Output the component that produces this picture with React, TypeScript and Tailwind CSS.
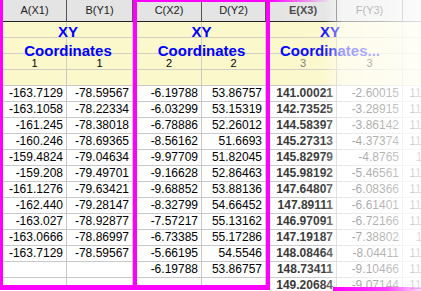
import React from "react";

type Col = {
  w: string;
  head: string;
  idx: string;
  vals: string[];
  headClass?: string;
  idxClass?: string;
  valClass?: string;
};

// 列1本ぶん: ヘッダ, ラベル行(黄色), データ行
function Column({ col }: { col: Col }) {
  return (
    <div className={`${col.w} shrink-0 flex flex-col`}>
      <div
        className={`h-[22px] shrink-0 border-b border-r border-b-[#222] border-r-[#555] bg-[#e4e4e4] text-center text-[11px] leading-[21px] ${
          col.headClass ?? "text-[#222]"
        }`}
      >
        {col.head}
      </div>
      <div className="h-[16px] shrink-0 border-b border-r border-[#cfcfc4] bg-[#fbf8cb]" />
      <div className="h-[16px] shrink-0 border-b border-r border-[#cfcfc4] bg-[#fbf8cb]" />
      <div
        className={`h-[16px] shrink-0 border-b border-r border-[#cfcfc4] bg-[#fbf8cb] pt-[2px] text-center text-[11px] leading-[15px] ${
          col.idxClass ?? "text-black"
        }`}
      >
        {col.idx}
      </div>
      <div className="h-[16px] shrink-0 border-b border-r border-[#c8c8c8] bg-[#fbf8cb]" />
      {col.vals.map((v, i) => (
        <div
          key={i}
          className={`h-[16px] shrink-0 border-b border-r border-[#c8c8c8] bg-white pr-[3px] text-right text-[12px] leading-[15px] ${
            col.valClass ?? "text-black"
          }`}
        >
          {v}
        </div>
      ))}
    </div>
  );
}

function Label({ text, className }: { text: string; className: string }) {
  return (
    <div
      className={`absolute top-[22px] text-center text-[15px] font-bold leading-[19px] text-[#0000ff] ${className}`}
    >
      XY
      <br />
      {text}
    </div>
  );
}

const colA: Col = {
  w: "w-[64px]",
  head: "A(X1)",
  idx: "1",
  vals: [
    "-163.7129",
    "-163.1058",
    "-161.245",
    "-160.246",
    "-159.4824",
    "-159.208",
    "-161.1276",
    "-162.440",
    "-163.027",
    "-163.0666",
    "-163.7129",
    "",
    "",
  ],
};

const colB: Col = {
  w: "w-[66px]",
  head: "B(Y1)",
  idx: "1",
  vals: [
    "-78.59567",
    "-78.22334",
    "-78.38018",
    "-78.69365",
    "-79.04634",
    "-79.49701",
    "-79.63421",
    "-79.28147",
    "-78.92877",
    "-78.86997",
    "-78.59567",
    "",
    "",
  ],
};

const colC: Col = {
  w: "w-[65px]",
  head: "C(X2)",
  idx: "2",
  vals: [
    "-6.19788",
    "-6.03299",
    "-6.78886",
    "-8.56162",
    "-9.97709",
    "-9.16628",
    "-9.68852",
    "-8.32799",
    "-7.57217",
    "-6.73385",
    "-5.66195",
    "-6.19788",
    "",
  ],
};

const colD: Col = {
  w: "w-[64px]",
  head: "D(Y2)",
  idx: "2",
  vals: [
    "53.86757",
    "53.15319",
    "52.26012",
    "51.6693",
    "51.82045",
    "52.86463",
    "53.88136",
    "54.66452",
    "55.13162",
    "55.17286",
    "54.5546",
    "53.86757",
    "",
  ],
};

const colE: Col = {
  w: "w-[67px]",
  head: "E(X3)",
  idx: "3",
  headClass: "text-[#444] font-bold",
  idxClass: "text-[#777]",
  valClass: "text-[#333] font-bold",
  vals: [
    "141.00021",
    "142.73525",
    "144.58397",
    "145.27313",
    "145.82979",
    "145.98192",
    "147.64807",
    "147.89111",
    "146.97091",
    "147.19187",
    "148.08464",
    "148.73411",
    "149.20684",
  ],
};

const colF: Col = {
  w: "w-[66px]",
  head: "F(Y3)",
  idx: "3",
  vals: [
    "-2.60015",
    "-3.28915",
    "-3.86142",
    "-4.37374",
    "-4.8765",
    "-5.46561",
    "-6.08366",
    "-6.61401",
    "-6.72166",
    "-7.38802",
    "-8.04411",
    "-9.10466",
    "-9.07144",
  ],
};

const colG: Col = {
  w: "w-[66px]",
  head: "G(X4)",
  idx: "4",
  vals: [
    "116.20482",
    "117.41236",
    "118.03571",
    "118.66102",
    "11.79344",
    "117.25819",
    "116.87403",
    "115.90127",
    "115.32768",
    "11.46612",
    "113.88205",
    "112.94061",
    "112.05533",
  ],
};

export default function App() {
  return (
    <div className="relative flex h-[291px] w-[421px] overflow-hidden bg-white font-['Liberation_Sans',Arial,sans-serif]">
      {/* 選択範囲 1 */}
      <div className="relative flex h-[290px] shrink-0 overflow-hidden border-b-[5px] border-l-[3px] border-r-4 border-[#ff00ff]">
        <Column col={colA} />
        <Column col={colB} />
        <Label text="Coordinates" className="left-0 right-0" />
      </div>

      {/* 選択範囲 2 */}
      <div className="relative flex h-[290px] shrink-0 overflow-hidden border-b-[5px] border-r-4 border-[#ff00ff]">
        <Column col={colC} />
        <Column col={colD} />
        <Label text="Coordinates" className="left-0 right-0" />
        <div className="absolute left-0 right-0 top-0 h-[2px] bg-[#ff00ff]" />
      </div>

      {/* ドラッグ中のゴースト */}
      <div className="relative flex h-[291px] w-[151px] shrink-0 overflow-hidden">
        <Column col={colE} />
        <Column col={colF} />
        <Column col={colG} />
        <Label text="Coordinates..." className="left-0 w-[120px]" />
        <div className="pointer-events-none absolute inset-0 bg-[linear-gradient(to_right,rgba(255,255,255,0)_0%,rgba(255,255,255,0.08)_36%,rgba(255,255,255,0.62)_48%,rgba(255,255,255,0.7)_75%,rgba(255,255,255,0.86)_100%)]" />
        <div className="absolute left-0 top-0 h-[2px] w-[60px] bg-[linear-gradient(to_right,#ff00ff,rgba(255,0,255,0))]" />
        <div className="absolute bottom-0 left-[63px] right-0 h-[4px] bg-[linear-gradient(to_right,#ff00ff_0%,#ff40ff_60%,rgba(255,0,255,0.15)_100%)]" />
      </div>
    </div>
  );
}
